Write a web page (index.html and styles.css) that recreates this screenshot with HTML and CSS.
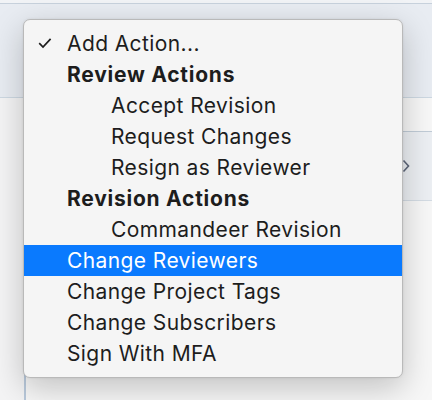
FILE: index.html
```html
<!DOCTYPE html>
<html lang="en">
<head>
<meta charset="UTF-8" />
<meta name="viewport" content="width=device-width, initial-scale=1" />
<title>Add Action</title>
<link rel="stylesheet" href="styles.css">
</head>
<body>

<div class="page">
  <div class="topline"></div>
  <div class="band"></div>
  <div class="content">
    <div class="gutter"></div>
    <div class="main">
      <div class="spacer"></div>
      <div class="row">
        <svg class="chevron" width="8" height="14" viewBox="0 0 8 14"><path d="M1.5 1.5 L6.5 7 L1.5 12.5" fill="none" stroke="#5d6679" stroke-width="1.6"/></svg>
      </div>
    </div>
  </div>
</div>

<ul class="menu">
  <li class="item checked">
    <svg class="check" width="14" height="12" viewBox="0 0 14 12"><path d="M1.2 6.2 L5 10 L12.6 1.8" fill="none" stroke="#1d1d1d" stroke-width="1.7"/></svg>
    Add Action...
  </li>
  <li class="item group">Review Actions</li>
  <li class="item sub">Accept Revision</li>
  <li class="item sub">Request Changes</li>
  <li class="item sub">Resign as Reviewer</li>
  <li class="item group">Revision Actions</li>
  <li class="item sub">Commandeer Revision</li>
  <li class="item active">Change Reviewers</li>
  <li class="item">Change Project Tags</li>
  <li class="item">Change Subscribers</li>
  <li class="item">Sign With MFA</li>
</ul>

</body>
</html>
```

FILE: styles.css
```css
body { margin: 0; width: 432px; height: 400px; overflow: hidden; background: #f6f6f7; font-family: Inter, "Noto Sans", sans-serif; position: relative; }
.page { display: flex; flex-direction: column; height: 400px; }
.topline { height: 3px; background: #f1f3f6; border-bottom: 1px solid #c7d1dc; }
.band { height: 93px; background: #e8ecf2; border-bottom: 1px solid #cdd8e2; }
.content { flex: 1; display: flex; }
.gutter { width: 24px; background: #f4f4f5; }
.main { flex: 1; border-left: 2px solid #b9c9db; background: #f7f7f7; }
.spacer { height: 33px; }
.row { height: 68px; background: #eceff3; border-top: 1px solid #c1ccd7; border-bottom: 1px solid #d4dce4; display: flex; align-items: center; justify-content: flex-end; padding-right: 22px; }
.chevron { display: block; }

.menu { position: absolute; left: 23px; top: 19px; width: 378px; margin: 0; padding: 8px 0 8px; list-style: none; background: #f5f5f5; border: 1px solid #b9b9b9; border-radius: 7px; box-shadow: 0 10px 32px rgba(0, 0, 0, 0.22), 0 0 3px rgba(0, 0, 0, 0.08); }
.item { position: relative; height: 31px; line-height: 31px; padding-left: 43px; font-size: 21px; letter-spacing: 0.4px; color: #1d1d1d; white-space: nowrap; }
.item.group { font-weight: 700; letter-spacing: 0.75px; }
.item.sub { padding-left: 87px; }
.item.active { background: #0a7afe; color: #ffffff; }
.check { position: absolute; left: 14px; top: 9px; }
```
